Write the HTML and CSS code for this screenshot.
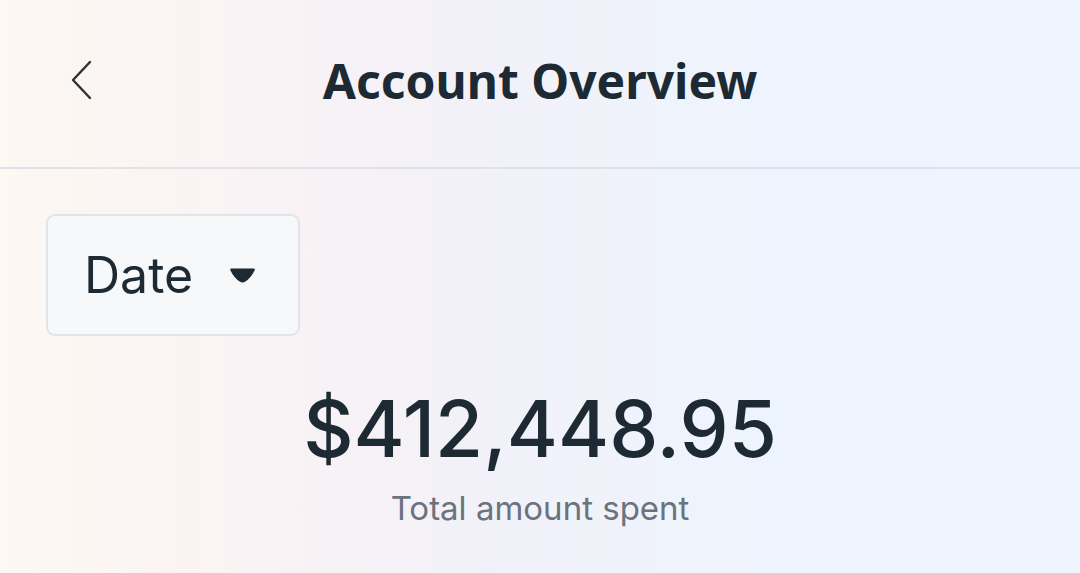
FILE: index.html
```html
<!DOCTYPE html>
<html lang="en">
<head>
<meta charset="utf-8">
<title>Account Overview</title>
<link rel="stylesheet" href="styles.css">
</head>
<body>
<div class="app">
  <header class="topbar">
    <button class="back" aria-label="Back">
      <svg width="24" height="40" viewBox="0 0 24 40" fill="none" stroke="#2a3138" stroke-width="2.4" stroke-linecap="round" stroke-linejoin="round"><path d="M20 2 L3 20 L20 38"/></svg>
    </button>
    <h1 class="title">Account Overview</h1>
    <span class="spacer"></span>
  </header>
  <main class="content">
    <div class="filters">
      <button class="select">
        <span class="select-label">Date</span>
        <svg class="caret" width="27" height="17" viewBox="0 0 27 17"><path d="M2.5 1.5 H24.5 Q26.5 1.5 25.5 3.5 Q22 11 16 14.8 Q13.5 16.2 11 14.8 Q5 11 1.5 3.5 Q0.5 1.5 2.5 1.5 Z" fill="#1d2a33"/></svg>
      </button>
    </div>
    <section class="summary">
      <div class="amount">$412,448.95</div>
      <div class="caption">Total amount spent</div>
    </section>
  </main>
</div>
</body>
</html>
```
FILE: styles.css
```css
* { box-sizing: border-box; }
html, body { margin: 0; padding: 0; }
body {
  width: 1080px;
  height: 573px;
  overflow: hidden;
  font-family: "Inter", "Noto Sans", sans-serif;
  color: #1d2a33;
  background: linear-gradient(90deg, #fdf8f2 0%, #fbf3f4 20%, #f2f1f9 45%, #eef4fd 70%, #eef5fe 100%);
}
.app { display: flex; flex-direction: column; height: 573px; }
.topbar {
  height: 169px;
  border-bottom: 2px solid #dfe2e8;
  display: flex;
  align-items: center;
  padding: 0 62px;
}
.back {
  width: 60px; height: 60px;
  display: flex; align-items: center; justify-content: flex-start;
  background: none; border: 0; padding: 0 0 0 8px; margin-top: -8px;
}
.title {
  flex: 1;
  margin: 0;
  text-align: center;
  font-family: "Noto Sans", sans-serif;
  font-weight: 700;
  font-size: 48px;
  letter-spacing: 0;
  margin-top: -6px;
  color: #1d2a33;
}
.spacer { width: 60px; }
.content { padding: 45px 46px 0; display: flex; flex-direction: column; }
.filters { display: flex; }
.select {
  width: 254px; height: 122px;
  display: flex; align-items: center;
  padding: 0 0 0 36px;
  gap: 36px;
  background: #f7f8fa;
  border: 2px solid #e1e4ea;
  border-radius: 9px;
  font-family: "Inter", sans-serif;
  color: #1d2a33;
}
.select-label { font-size: 50px; font-weight: 400; }
.caret { margin-top: 0px; }
.summary { display: flex; flex-direction: column; align-items: center; margin-top: 46px; }
.amount { font-size: 78px; font-weight: 500; line-height: 1.2; color: #1d2a33; }
.caption { font-size: 33px; color: #6b737d; margin-top: 12px; }
```
